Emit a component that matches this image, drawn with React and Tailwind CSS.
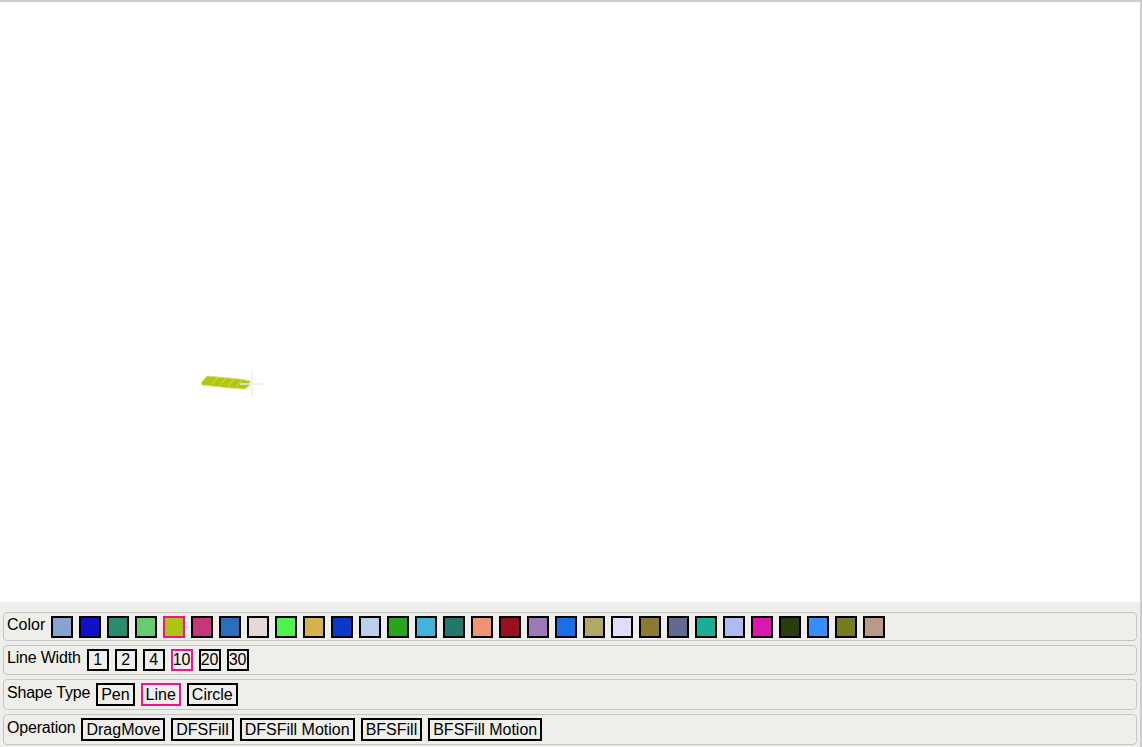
import React from 'react';

const COLORS = [
  '#87a3cf', '#1010c8', '#2a8c6e', '#66cc70', '#acc412', '#c4387a', '#2a6ebe', '#e6d8d8',
  '#4cf44c', '#d6b24e', '#0a38c8', '#bcd0ec', '#2aa41a', '#42b4dc', '#22786a', '#ee9472',
  '#9a101e', '#9c7aba', '#1a6ee6', '#b0a864', '#e2dcfa', '#8c7a30', '#626a92', '#1aae94',
  '#acbcf0', '#dc16b0', '#2a3c0e', '#388ef8', '#767c1e', '#ba9a84',
];

const Row = ({ label, height, tight, children }) => (
  <div className={`flex items-center gap-[6px] pl-[3px] border border-[#c4c4c0] rounded-[4px] ${height}`}>
    <span className={`leading-[18px] mb-[4px] whitespace-nowrap ${tight ? 'tracking-[-0.2px]' : ''}`}>{label}</span>
    {children}
  </div>
);

const Btn = ({ children, active, small }) => (
  <button
    className={`border-2 ${active ? 'border-[#f0148c]' : 'border-black'} ${
      small ? 'w-[22px] h-[22px] px-0' : 'h-[23px] px-[3px]'
    } flex items-center justify-center leading-[18px] whitespace-nowrap bg-transparent`}
  >
    {children}
  </button>
);

export default function App() {
  return (
    <div
      className="w-[1142px] h-[747px] flex flex-col border-t-2 border-r-2 border-[#cdcdcd] text-[16px] text-black overflow-hidden"
      style={{ fontFamily: '"Liberation Sans", Arial, sans-serif' }}
    >
      <div className="relative flex-1 bg-white">
        <svg className="absolute left-[190px] top-[363px]" width="80" height="40" viewBox="0 0 80 40">
          <polygon
            points="11,18 17,11 50,14 60,16 60,20 55,24 40,23 12,20"
            fill="#b4c612"
            stroke="#d8e070"
            strokeWidth="0.8"
          />
          <g stroke="#d4dc60" strokeWidth="1">
            <line x1="22" y1="19" x2="28" y2="12" />
            <line x1="30" y1="20" x2="36" y2="13" />
            <line x1="38" y1="21" x2="44" y2="14" />
            <line x1="46" y1="22" x2="52" y2="15" />
          </g>
          <g stroke="#ececec" strokeWidth="1.5">
            <line x1="62" y1="6" x2="62" y2="31" />
            <line x1="50" y1="19" x2="74" y2="19" />
          </g>
        </svg>
      </div>
      <div className="bg-[#eeeeea] pt-[10px] px-[3px] pb-[2px] flex flex-col gap-[4px]">
        <Row label="Color" height="h-[29px]">
          {COLORS.map((c, i) => (
            <div
              key={i}
              className={`w-[22px] h-[22px] shrink-0 border-2 ${i === 4 ? 'border-[#f0148c]' : 'border-black'}`}
              style={{ backgroundColor: c }}
            />
          ))}
        </Row>
        <Row label="Line Width" height="h-[30px]" tight>
          {['1', '2', '4', '10', '20', '30'].map((w) => (
            <Btn key={w} small active={w === '10'}>
              {w}
            </Btn>
          ))}
        </Row>
        <Row label="Shape Type" height="h-[31px]" tight>
          <Btn>Pen</Btn>
          <Btn active>Line</Btn>
          <Btn>Circle</Btn>
        </Row>
        <Row label="Operation" height="h-[31px]" tight>
          <Btn>DragMove</Btn>
          <Btn>DFSFill</Btn>
          <Btn>DFSFill Motion</Btn>
          <Btn>BFSFill</Btn>
          <Btn>BFSFill Motion</Btn>
        </Row>
      </div>
    </div>
  );
}
